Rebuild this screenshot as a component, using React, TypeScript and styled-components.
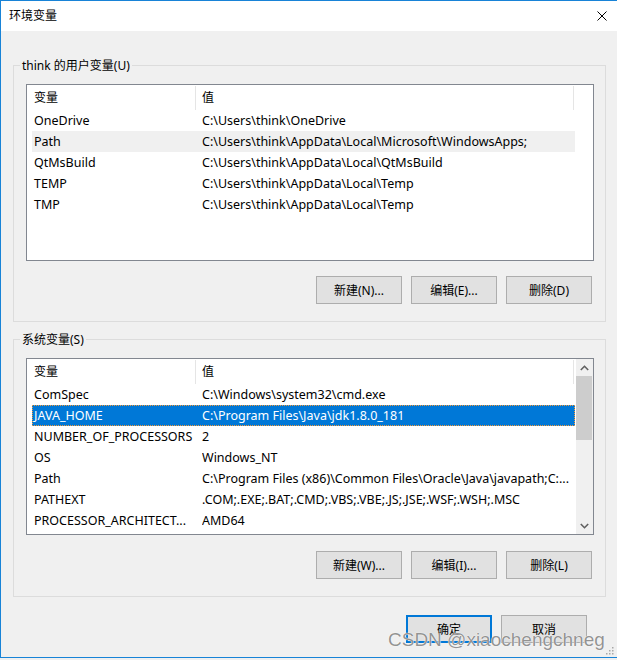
import React from "react";
import styled, { createGlobalStyle, css } from "styled-components";

const Global = createGlobalStyle`
  html, body { margin: 0; padding: 0; background: #f0f0f0; }
  body {
    font-family: "Noto Sans", "Noto Sans CJK SC", sans-serif;
    font-size: 12.5px;
    color: #000;
  }
  * { box-sizing: border-box; }
`;

const Window = styled.div`
  position: relative;
  width: 617px;
  height: 658px;
  border-top: 1px solid #1883d7;
  border-left: 1px solid #1883d7;
  border-bottom: 1px solid #1883d7;
  background: #f0f0f0;
  display: flex;
  flex-direction: column;
`;

const TitleBar = styled.div`
  height: 30px;
  flex: none;
  background: #fff;
  display: flex;
  align-items: center;
  justify-content: space-between;
  padding: 0 10px 0 8px;
`;

const TitleText = styled.span`
  font-size: 12px;
  line-height: 16px;
`;

const CloseIcon = styled.svg`
  width: 10px;
  height: 10px;
  display: block;
`;

const Body = styled.div`
  flex: 1;
  display: flex;
  flex-direction: column;
  padding: 34px 11px 0 12px;
`;

const GroupBox = styled.section<{ $gap?: number }>`
  border: 1px solid #dcdcdc;
  padding: 0 11px 17px 12px;
  margin-top: ${(p) => p.$gap ?? 0}px;
  display: flex;
  flex-direction: column;
`;

const GroupTitle = styled.div`
  margin: -8px 0 0 -6px;
  padding: 0 2px;
  height: 16px;
  line-height: 16px;
  width: fit-content;
  background: #f0f0f0;
  font-size: 12px;
  white-space: nowrap;
`;

const ListView = styled.div`
  margin-top: 10px;
  height: 177px;
  border: 1px solid #828790;
  background: #fff;
  display: flex;
  overflow: hidden;
`;

const ListMain = styled.div`
  flex: 1;
  min-width: 0;
  display: flex;
  flex-direction: column;
`;

const Header = styled.div`
  height: 25px;
  flex: none;
  display: flex;
`;

const HeaderCell = styled.div<{ $w: number; $pad: number }>`
  width: ${(p) => p.$w}px;
  padding-left: ${(p) => p.$pad}px;
  margin-top: 1px;
  border-right: 1px solid #e5e5e5;
  line-height: 24px;
  font-size: 12px;
`;

const Row = styled.div<{ $state?: "hover" | "selected" }>`
  margin-left: 5px;
  width: 543px;
  height: 21px;
  flex: none;
  display: grid;
  grid-template-columns: 170px 1fr;
  line-height: 21px;
  white-space: nowrap;
  ${(p) =>
    p.$state === "hover" &&
    css`
      background: #f0f0f0;
    `}
  ${(p) =>
    p.$state === "selected" &&
    css`
      background: #0078d7;
      color: #fff;
      outline: 1px dotted #f39a3a;
      outline-offset: -1px;
    `}
`;

const NameCell = styled.span`
  padding-left: 2px;
  overflow: hidden;
`;

const ValueCell = styled.span`
  overflow: hidden;
`;

const Gutter = styled.div<{ $scroll?: boolean }>`
  width: 17px;
  flex: none;
  display: flex;
  flex-direction: column;
  background: ${(p) => (p.$scroll ? "#f0f0f0" : "#fff")};
`;

const ArrowBox = styled.div`
  height: 17px;
  flex: none;
  display: flex;
  align-items: center;
  justify-content: center;
`;

const Track = styled.div`
  flex: 1;
  display: flex;
  flex-direction: column;
`;

const Thumb = styled.div`
  height: 64px;
  margin: 0 1px 0 0;
  background: #cdcdcd;
`;

const ButtonRow = styled.div<{ $top: number }>`
  margin-top: ${(p) => p.$top}px;
  display: flex;
  justify-content: flex-end;
  gap: 9px;
  padding-right: 2px;
`;

const Button = styled.button<{ $default?: boolean }>`
  width: 86px;
  height: 28px;
  background: #e1e1e1;
  border: 1px solid #adadad;
  font-family: inherit;
  font-size: 12px;
  color: #000;
  padding: 0;
  display: flex;
  align-items: center;
  justify-content: center;
  ${(p) =>
    p.$default &&
    css`
      border: 2px solid #0078d7;
    `}
`;

const Footer = styled.div`
  margin-top: 18px;
  margin-right: 19px;
  display: flex;
  justify-content: flex-end;
  gap: 9px;
`;

const Watermark = styled.div`
  position: absolute;
  left: 387px;
  top: 628px;
  font-family: "Liberation Sans", Arial, sans-serif;
  font-size: 19px;
  line-height: 22px;
  color: rgba(105, 105, 105, 0.72);
  text-shadow: 0 0 1px #fff, 0 0 1px #fff;
  white-space: nowrap;
  pointer-events: none;
`;

const Grip = styled.svg`
  position: absolute;
  right: 3px;
  bottom: 2px;
  width: 8px;
  height: 8px;
`;

type Item = { name: string; value: string; state?: "hover" | "selected" };

const userVars: Item[] = [
  { name: "OneDrive", value: "C:\\Users\\think\\OneDrive" },
  { name: "Path", value: "C:\\Users\\think\\AppData\\Local\\Microsoft\\WindowsApps;", state: "hover" },
  { name: "QtMsBuild", value: "C:\\Users\\think\\AppData\\Local\\QtMsBuild" },
  { name: "TEMP", value: "C:\\Users\\think\\AppData\\Local\\Temp" },
  { name: "TMP", value: "C:\\Users\\think\\AppData\\Local\\Temp" },
];

const sysVars: Item[] = [
  { name: "ComSpec", value: "C:\\Windows\\system32\\cmd.exe" },
  { name: "JAVA_HOME", value: "C:\\Program Files\\Java\\jdk1.8.0_181", state: "selected" },
  { name: "NUMBER_OF_PROCESSORS", value: "2" },
  { name: "OS", value: "Windows_NT" },
  { name: "Path", value: "C:\\Program Files (x86)\\Common Files\\Oracle\\Java\\javapath;C:..." },
  { name: "PATHEXT", value: ".COM;.EXE;.BAT;.CMD;.VBS;.VBE;.JS;.JSE;.WSF;.WSH;.MSC" },
  { name: "PROCESSOR_ARCHITECT...", value: "AMD64" },
];

const Chevron = ({ up }: { up?: boolean }) => (
  <svg width="9" height="6" viewBox="0 0 9 6">
    <polyline
      points={up ? "0.8,5 4.5,1.3 8.2,5" : "0.8,1 4.5,4.7 8.2,1"}
      fill="none"
      stroke="#606060"
      strokeWidth="1.6"
    />
  </svg>
);

const List = ({ items, scroll }: { items: Item[]; scroll?: boolean }) => (
  <ListView>
    <ListMain>
      <Header>
        <HeaderCell $w={169} $pad={7}>变量</HeaderCell>
        <HeaderCell $w={378} $pad={6}>值</HeaderCell>
      </Header>
      {items.map((it, i) => (
        <Row key={i} $state={it.state}>
          <NameCell>{it.name}</NameCell>
          <ValueCell>{it.value}</ValueCell>
        </Row>
      ))}
    </ListMain>
    <Gutter $scroll={scroll}>
      {scroll && (
        <>
          <ArrowBox>
            <Chevron up />
          </ArrowBox>
          <Track>
            <Thumb />
          </Track>
          <ArrowBox>
            <Chevron />
          </ArrowBox>
        </>
      )}
    </Gutter>
  </ListView>
);

export default function App() {
  return (
    <>
      <Global />
      <Window>
        <TitleBar>
          <TitleText>环境变量</TitleText>
          <CloseIcon viewBox="0 0 10 10">
            <path d="M0.5 0.5 L9.5 9.5 M9.5 0.5 L0.5 9.5" stroke="#000" strokeWidth="1" />
          </CloseIcon>
        </TitleBar>
        <Body>
          <GroupBox>
            <GroupTitle>think 的用户变量(U)</GroupTitle>
            <List items={userVars} />
            <ButtonRow $top={15}>
              <Button>新建(N)...</Button>
              <Button>编辑(E)...</Button>
              <Button>删除(D)</Button>
            </ButtonRow>
          </GroupBox>
          <GroupBox $gap={17}>
            <GroupTitle>系统变量(S)</GroupTitle>
            <List items={sysVars} scroll />
            <ButtonRow $top={16}>
              <Button>新建(W)...</Button>
              <Button>编辑(I)...</Button>
              <Button>删除(L)</Button>
            </ButtonRow>
          </GroupBox>
          <Footer>
            <Button $default>确定</Button>
            <Button>取消</Button>
          </Footer>
        </Body>
        <Watermark>CSDN @xiaochengchneg</Watermark>
        <Grip viewBox="0 0 8 8">
          {[
            [6, 0],
            [6, 3],
            [3, 3],
            [6, 6],
            [3, 6],
            [0, 6],
          ].map(([x, y], i) => (
            <rect key={i} x={x} y={y} width="1.5" height="1.5" fill="#a8a8a8" />
          ))}
        </Grip>
      </Window>
    </>
  );
}
